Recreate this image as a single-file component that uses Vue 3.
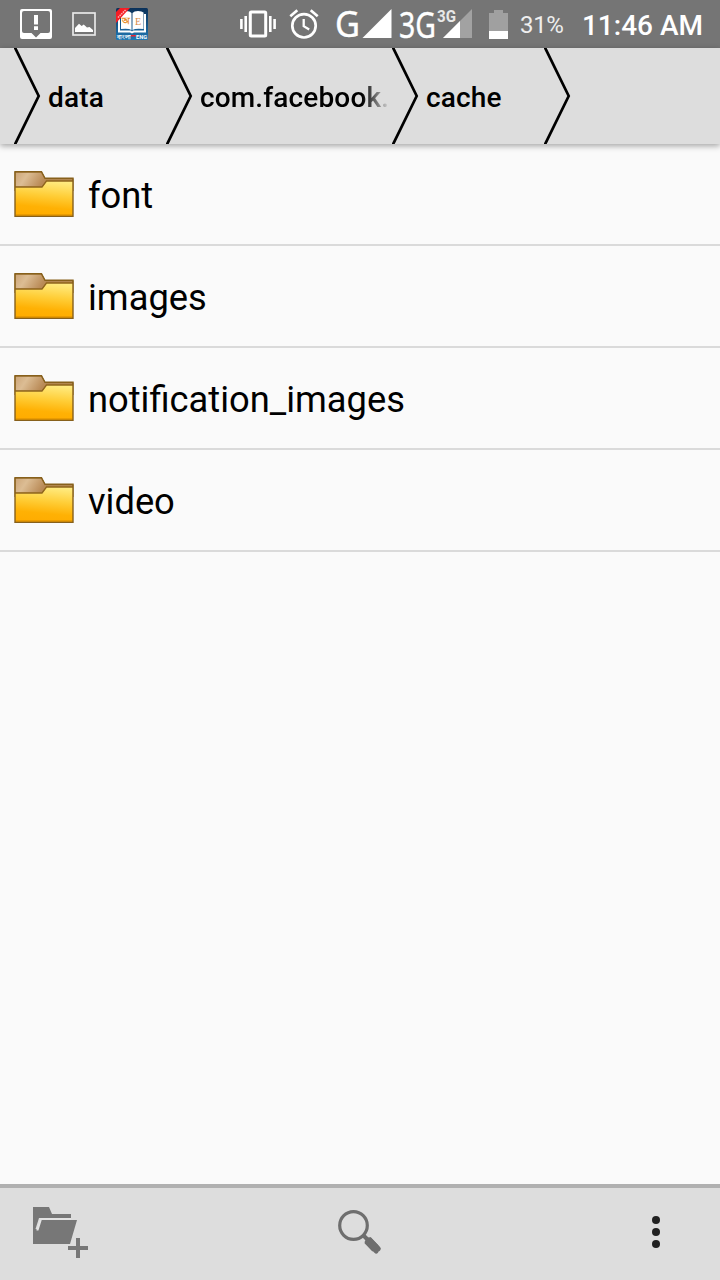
<template>
  <div class="screen">
    <div class="status-bar">
      <div class="notifications">
        <svg class="icon-alert" width="32" height="32" viewBox="0 0 32 32">
          <path
            fill="#fff"
            fill-rule="evenodd"
            d="M2 1h28a2 2 0 0 1 2 2v26a2 2 0 0 1-2 2H2a2 2 0 0 1-2-2V3a2 2 0 0 1 2-2zM4 3a2 2 0 0 0-2 2V23a2 2 0 0 0 2 2h7.500l4.500 4.500 4.500-4.500H28a2 2 0 0 0 2-2V5a2 2 0 0 0-2-2z"
          />
          <path fill="#fff" d="M14 7h4v9.500h-4zM14 18.300h4v3.700h-4z" />
        </svg>
        <svg class="icon-picture" width="24" height="24" viewBox="0 0 24 24">
          <rect x="1" y="1" width="22" height="22" fill="none" stroke="#e8e8e8" stroke-width="1.700" />
          <path fill="#fff" d="M3 20v-4l4-4.300 2.700 2.300 2-1.500 3.300 3 2.500-.5 3.500 3v2z" />
        </svg>
        <svg class="icon-book" width="32" height="32" viewBox="0 0 32 32">
          <defs>
            <linearGradient id="bookBg" x1="0" y1="0" x2="0" y2="1">
              <stop offset="0" stop-color="#0b3159" />
              <stop offset="1" stop-color="#2078b4" />
            </linearGradient>
          </defs>
          <rect width="32" height="32" rx="1.500" fill="url(#bookBg)" />
          <path fill="#fff" d="M2 6h2v16.500h11l1 1 1-1h11V6h2v18.500H18l-2 1-2-1H2z" />
          <path fill="#fff" d="M5 5q1-2 5-2 4 0 5.500 2v17q-3-2-10.500-1zM16.500 5q1.500-2 5.500-2 4 0 5.500 1.500V21q-8-1-11 1z" />
          <path fill="#f51d25" d="M4 0h10L0 15V4z" />
          <path stroke="#ffb5b5" stroke-width="1.500" stroke-dasharray="1.500 .8" d="M2 9.500l8-8" />
          <text x="6" y="16" class="book-bn" textLength="8" lengthAdjust="spacingAndGlyphs">অ</text>
          <text x="19" y="16.500" class="book-en">E</text>
          <text x="1" y="30.500" class="book-name" textLength="14" lengthAdjust="spacingAndGlyphs">বাংলা</text>
          <path fill="#ed2630" d="M15 27h5v1.500h-5z" />
          <text x="20" y="30.500" class="book-name" textLength="11" lengthAdjust="spacingAndGlyphs">ENG</text>
        </svg>
      </div>
      <div class="system">
        <svg class="icon-vibrate" width="36" height="28" viewBox="0 0 36 28">
          <rect x="10.300" y="2" width="15.400" height="24" rx="1" fill="none" stroke="#fff" stroke-width="3" />
          <path stroke="#fff" stroke-width="2.600" d="M1.400 9v10M5.700 6v16M30.300 6v16M34.600 9v10" />
        </svg>
        <svg class="icon-alarm" width="30" height="30" viewBox="0 0 30 30">
          <g fill="none" stroke="#fff" stroke-width="2.700">
            <circle cx="15" cy="16.800" r="11.700" />
            <path d="M1.300 7.200l7-5.900M28.700 7.200l-7-5.900" />
            <path stroke-width="2.300" d="M14.700 10v7.200l5.500 3.300" />
          </g>
        </svg>
        <svg class="icon-signal" width="137" height="48" viewBox="0 0 137 48">
          <text x="-1" y="37" class="net" textLength="25" lengthAdjust="spacingAndGlyphs">G</text>
          <path fill="#fff" d="M26.500 38l29-29v29z" />
          <text x="63" y="38" class="net" textLength="37" lengthAdjust="spacingAndGlyphs">3G</text>
          <text x="101" y="22" class="net-small" textLength="19" lengthAdjust="spacingAndGlyphs">3G</text>
          <path fill="#a2a2a2" d="M107 38l29-29v29z" />
          <path fill="#fff" d="M107 38l17-17v17z" />
        </svg>
        <svg class="icon-battery" width="19" height="29" viewBox="0 0 19 29">
          <path fill="#a0a0a0" d="M0 3h5V0h9v3h5v18H0z" />
          <path fill="#fff" d="M0 21h19v8H0z" />
        </svg>
        <span class="percent">31%</span>
        <span class="time">11:46 AM</span>
      </div>
    </div>

    <div class="crumbs">
      <div class="crumb" v-for="crumb in crumbs" :key="crumb.name" :class="{ wide: crumb.wide }">
        <svg class="arrow" width="28" height="96" viewBox="0 0 28 96">
          <path d="M.7-1L24.700 48l-24 49" fill="none" stroke="#000" stroke-width="2.700" />
        </svg>
        <span class="crumb-name">{{ crumb.name }}</span>
      </div>
      <svg class="arrow" width="28" height="96" viewBox="0 0 28 96">
        <path d="M.7-1L24.700 48l-24 49" fill="none" stroke="#000" stroke-width="2.700" />
      </svg>
    </div>

    <svg class="defs" width="0" height="0">
      <defs>
        <linearGradient id="folderFront" x1="0.600" y1="0" x2="0.450" y2="1">
          <stop offset="0" stop-color="#ffeb80" />
          <stop offset="0.400" stop-color="#ffce38" />
          <stop offset="0.750" stop-color="#ffb104" />
          <stop offset="1" stop-color="#ffac00" />
        </linearGradient>
        <linearGradient id="folderTab" x1="0" y1="0" x2="1" y2="0.300">
          <stop offset="0" stop-color="#cda679" />
          <stop offset="0.400" stop-color="#dcbd94" />
          <stop offset="1" stop-color="#b98a56" />
        </linearGradient>
      </defs>
    </svg>

    <div class="files">
      <div class="file" v-for="folder in folders" :key="folder">
        <svg class="folder" width="60" height="46" viewBox="0 0 60 46">
          <path fill="#b2864f" stroke="#876021" d="M1 1h26.500l3.500 6.500h28V20H1z" />
          <path fill="url(#folderTab)" d="M1.500 1.500h26l4.500 7-4 7H1.500z" />
          <path fill="url(#folderFront)" d="M1 16h27.500l4-6H59v35H1z" />
          <path fill="none" stroke="#90651d" stroke-width="1.300" d="M1 16h27l4.500-6H59" />
          <path fill="none" stroke="#87601b" stroke-width="1.400" d="M1 .8h26.500l3.500 6.500h28v38H1z" />
          <path stroke="#d58a00" d="M2 44h56" />
        </svg>
        <span>{{ folder }}</span>
      </div>
    </div>

    <div class="toolbar">
      <svg class="icon-new" width="56" height="52" viewBox="0 0 56 52">
        <path fill="#777" d="M0 0h16l3 7h19v4H6L2.500 22h2.700L8 13h36l-7 24H0z" />
        <path fill="none" stroke="#e3e3e3" stroke-width="2" d="M3.500 22.500h1.200L8 12h30" />
        <path stroke="#777" stroke-width="4" d="M35 41h20M45 31v20" />
      </svg>
      <svg class="icon-search" width="46" height="46" viewBox="0 0 46 46">
        <circle cx="16.500" cy="16.500" r="13.800" fill="none" stroke="#6e6e6e" stroke-width="3.200" />
        <path stroke="#6e6e6e" stroke-width="4" d="M26 26l6 6" />
        <path stroke="#6e6e6e" stroke-width="8.500" stroke-linejoin="round" d="M30.500 31l8 8.500" />
        <path stroke="#6e6e6e" stroke-width="5" stroke-linecap="round" d="M32.300 30.800l9 9M30.200 33l9 9" />
      </svg>
      <svg class="icon-menu" width="8" height="32" viewBox="0 0 8 32">
        <circle cx="4" cy="4" r="4" />
        <circle cx="4" cy="16" r="4" />
        <circle cx="4" cy="28" r="4" />
      </svg>
    </div>
  </div>
</template>

<script setup>
const crumbs = [
  { name: "data" },
  { name: "com.facebook.", wide: true },
  { name: "cache" },
];
const folders = ["font", "images", "notification_images", "video"];
</script>

<style>
body {
  margin: 0;
  background: #fafafa;
}
</style>

<style scoped>
.screen {
  display: flex;
  flex-direction: column;
  height: 100vh;
  font-family: Roboto, sans-serif;
  color: #000;
  overflow: hidden;
}
svg {
  display: block;
  flex: none;
}
.status-bar {
  display: flex;
  justify-content: space-between;
  flex: none;
  box-sizing: border-box;
  height: 48px;
  padding: 0 17px 0 20px;
  background: #757575;
  color: #fff;
}
.notifications,
.system {
  display: flex;
  align-items: center;
}
.icon-picture {
  margin-left: 20px;
}
.icon-book {
  margin-left: 20px;
}
.book-bn {
  font: bold 10px "Noto Sans", sans-serif;
  fill: #e58a25;
}
.book-en {
  font: 10px "Liberation Serif", serif;
  fill: #d98b4a;
}
.book-name {
  font: bold 6px Roboto, sans-serif;
  fill: #fff;
}
.icon-alarm {
  margin-left: 13px;
}
.icon-signal {
  margin-left: 17px;
  overflow: visible;
}
.net {
  font: 36px "Noto Sans", sans-serif;
  fill: #fff;
  stroke: #fff;
  stroke-width: 0.4px;
}
.net-small {
  font: bold 16px Roboto, sans-serif;
  fill: #e8e8e8;
}
.icon-battery {
  margin-left: 16px;
}
.percent {
  width: 44px;
  margin-left: 12px;
  padding-top: 1px;
  font-size: 24px;
  letter-spacing: -0.3px;
  color: #eee;
}
.time {
  margin-left: 18px;
  padding-top: 3px;
  font-size: 28px;
  font-weight: 500;
  white-space: nowrap;
}
.crumbs {
  display: flex;
  flex: none;
  height: 96px;
  padding-left: 14px;
  background: #ddd;
  box-shadow: 0 2px 6px rgba(0, 0, 0, 0.35);
  z-index: 1;
}
.crumb {
  display: flex;
  align-items: center;
  width: 152px;
}
.crumb.wide {
  width: 226px;
}
.crumb-name {
  margin-left: 6px;
  padding-top: 3px;
  font-size: 28px;
  font-weight: 500;
  letter-spacing: 0.15px;
}
.wide .crumb-name {
  width: 188px;
  overflow: hidden;
  white-space: nowrap;
  mask-image: linear-gradient(to right, #000 162px, transparent 190px);
}
.defs {
  position: absolute;
}
.files {
  flex: 1;
}
.file {
  display: flex;
  align-items: center;
  box-sizing: border-box;
  height: 102px;
  padding-left: 14px;
  border-bottom: 2px solid #dadada;
}
.file span {
  margin-left: 14px;
  padding-top: 2px;
  font-size: 36.300px;
}
.toolbar {
  display: flex;
  align-items: center;
  justify-content: space-between;
  flex: none;
  box-sizing: border-box;
  height: 96px;
  padding: 0 60px 4px 33px;
  border-top: 4px solid #b0b0b0;
  background: #ddd;
}
.icon-new {
  margin-top: 2px;
}
.icon-search {
  margin-right: 22px;
}
.icon-menu {
  fill: #212121;
}
</style>
